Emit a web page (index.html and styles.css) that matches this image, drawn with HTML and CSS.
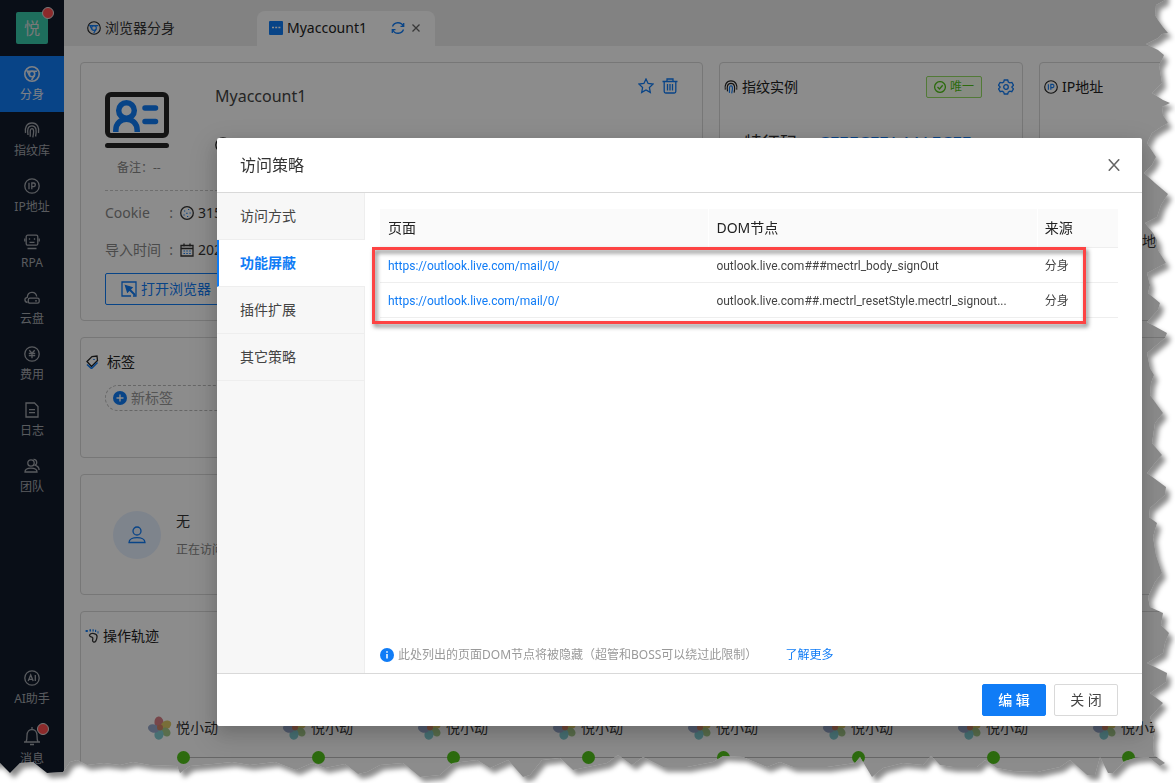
FILE: index.html
```html
<!DOCTYPE html>
<html lang="zh-CN">
<head>
<meta charset="utf-8">
<title>访问策略</title>
<link rel="stylesheet" href="styles.css">
</head>
<body>
<svg class="sprite" aria-hidden="true">
  <defs>
    <symbol id="chrome" viewBox="0 0 16 16"><circle cx="8" cy="8" r="7.2"/><circle class="accent" cx="8" cy="8" r="2.7"/><path class="accent" d="M3.2 5.3h9.8M5.6 9.3L2.8 4.4M10.4 9.3L7.6 14"/></symbol>
    <symbol id="finger" viewBox="0 0 16 16"><path d="M1.500 11C.5 6 2.500 1 8 1s7.500 5 6.500 10M4 13C3.200 8 3.500 3.800 8 3.800c4.500 0 4.800 5 3.600 10.700"/><path class="accent" d="M6.200 14.700C6.400 10 5.600 6.600 8 6.600s1.700 4.500.8 8.700"/></symbol>
    <symbol id="ip" viewBox="0 0 16 16"><circle cx="8" cy="8" r="7.200"/><path class="accent" d="M5 4.800v6.400M7.800 11.200V5h2.100a1.900 1.900 0 0 1 0 3.700H7.800"/></symbol>
    <symbol id="robot" viewBox="0 0 16 16"><rect x="2.200" y="1.200" width="11.600" height="10" rx="1.500"/><path d="M.8 4.500v3M15.200 4.500v3M5.500 4.300v1.500M10.500 4.300v1.500M5.500 8.300h5M3.500 14.500h9"/></symbol>
    <symbol id="cloud" viewBox="0 0 16 16"><path d="M3.500 12.500C.2 12 0 7.800 3.300 7.300 3.600 1 11.800.7 12.700 6.500M6 8.200h7.500q1.700 0 1.700 2v1.300q0 1.700-1.700 1.700H6q-1.700 0-1.700-1.700V10q0-1.800 1.700-1.800zM11 10.800h2"/></symbol>
    <symbol id="yen" viewBox="0 0 16 16"><circle cx="8" cy="8" r="7.200"/><path d="M5.300 4.200L8 7.200l2.700-3M4.800 7.500h6.400M4.800 9.700h6.400M8 7.200v5"/></symbol>
    <symbol id="doc" viewBox="0 0 16 16"><path d="M2 1h8.500L14 4.500V15H2zM5 7.700h6M5 10.700h6"/></symbol>
    <symbol id="team" viewBox="0 0 16 16"><circle cx="7" cy="5" r="3.200"/><path d="M1 14c0-5.300 12-5.300 12 0zM9.500 1.400c3.600-.2 4.200 4.300 1.600 5.800 2 .7 3.900 2.200 4 4.800"/></symbol>
    <symbol id="ai" viewBox="0 0 16 16"><circle cx="8" cy="8" r="7.200"/><path d="M4.200 11L6.700 5l2.500 6M5 9.300h3.400M11.300 5v6"/></symbol>
    <symbol id="bell" viewBox="0 0 20 20"><path d="M2 16h16M4 16c1-2 1-4 1-6.500C5 1.500 15 1.500 15 9.500c0 2.500 0 4.500 1 6.500M10 1v2.500M8 18.500h4"/></symbol>
    <symbol id="star" viewBox="0 0 16 16"><path d="M8 1l2.100 4.500 4.900.6-3.600 3.400.9 4.900L8 12l-4.300 2.400.9-4.900L1 6.100l4.900-.6z"/></symbol>
    <symbol id="trash" viewBox="0 0 16 16"><path d="M.5 3.500h15M5 3.500V1h6v2.500M2.200 3.500V13.500q0 1.500 1.500 1.500h8.600q1.500 0 1.500-1.500V3.500M5.500 6v6.500M8 6v6.500M10.500 6v6.500"/></symbol>
    <symbol id="gear" viewBox="0 0 16 16"><path d="M6.300 1h3.400l.6 2 1.500.9 2.100-.5 1.600 2.900L14 7.800v.6l1.500 1.500-1.700 2.800-2-.5-1.500.9-.6 1.900H6.300l-.6-1.900-1.500-.9-2 .5L.5 9.900 2 8.400v-.6L.5 6.300l1.600-2.900 2.100.5L5.700 3z"/><circle cx="8" cy="8" r="2.300"/></symbol>
    <symbol id="user" viewBox="0 0 18 18"><circle cx="9" cy="5" r="4"/><path d="M1 16.500c0-6.600 16-6.600 16 0z"/></symbol>
    <symbol id="pinwheel" viewBox="0 0 24 24">
      <ellipse cx="11" cy="6.500" rx="4.500" ry="6" fill="#d98088" transform="rotate(-8 11 6.500)"/>
      <ellipse cx="18" cy="9" rx="4.200" ry="5.500" fill="#dcc868" transform="rotate(58 18 9)"/>
      <ellipse cx="18" cy="16" rx="4" ry="5" fill="#a5c98a" transform="rotate(-45 18 16)"/>
      <ellipse cx="11" cy="18.500" rx="4.500" ry="5.300" fill="#82cdd2" transform="rotate(15 11 18.500)"/>
      <ellipse cx="5.500" cy="12.500" rx="4.200" ry="5.600" fill="#98a9cc" transform="rotate(-72 5.500 12.500)"/>
      <circle cx="12" cy="11.500" r="3" fill="#d08468"/>
    </symbol>
  </defs>
</svg>

<div class="app">
  <nav class="rail" aria-label="主导航">
    <div class="rail-head"><span class="avatar">悦<i class="dot"></i></span></div>
    <a class="rail-item current" href="#"><svg class="icon"><use href="#chrome"/></svg>分身</a>
    <a class="rail-item" href="#"><svg class="icon"><use href="#finger"/></svg>指纹库</a>
    <a class="rail-item" href="#"><svg class="icon"><use href="#ip"/></svg>IP地址</a>
    <a class="rail-item" href="#"><svg class="icon"><use href="#robot"/></svg>RPA</a>
    <a class="rail-item" href="#"><svg class="icon"><use href="#cloud"/></svg>云盘</a>
    <a class="rail-item" href="#"><svg class="icon"><use href="#yen"/></svg>费用</a>
    <a class="rail-item" href="#"><svg class="icon"><use href="#doc"/></svg>日志</a>
    <a class="rail-item" href="#"><svg class="icon"><use href="#team"/></svg>团队</a>
    <span class="spacer"></span>
    <a class="rail-item" href="#"><svg class="icon"><use href="#ai"/></svg>AI助手</a>
    <a class="rail-item bell" href="#"><svg class="icon"><use href="#bell"/></svg>消息<i class="dot"></i></a>
  </nav>

  <div class="workspace">
    <header class="tabs">
      <a class="tab" href="#"><svg class="icon small duo"><use href="#chrome"/></svg>浏览器分身</a>
      <div class="tab open">
        <svg class="icon small" viewBox="0 0 14 14"><rect width="14" height="14" rx="1" fill="#107cf6" stroke="none"/><path d="M3 6.500h2M6.200 6.500h2M9.400 6.500h2" stroke="#fff"/></svg>
        <span class="tab-name">Myaccount1</span>
        <button class="bare blue" aria-label="刷新"><svg class="icon small" viewBox="0 0 14 14"><path d="M1.500 5.500C3 1 10 .2 12.200 5M12.700 2v3.300H9.500M12.500 8.500C11 13 4 13.800 1.800 9M1.300 12V8.700h3.200"/></svg></button>
        <button class="bare" aria-label="关闭标签"><svg class="icon tiny" viewBox="0 0 10 10"><path d="M1.500 1.500l7 7M8.500 1.500l-7 7"/></svg></button>
      </div>
    </header>

    <main class="board">
      <section class="card profile">
        <div class="profile-top">
          <div class="profile-pic">
            <svg class="badge" viewBox="0 0 64 56"><rect x="2.500" y="2.500" width="59" height="41" rx="3.500" fill="none" stroke="#262626" stroke-width="5"/><rect y="51" width="64" height="5" rx="2.500" fill="#262626"/><g fill="none" stroke="#107cf6" stroke-width="5.500"><circle cx="21.500" cy="18.500" r="7.800"/><path d="M10.800 40v-1.500c0-15 21.400-15 21.400 0V40"/><path d="M40 16h10.500M40 29.500h10.500" stroke-linecap="round"/></g></svg>
            <span class="remark">备注：--</span>
          </div>
          <div class="profile-text"><span class="name">Myaccount1</span><svg class="icon"><use href="#chrome"/></svg></div>
          <div class="actions">
            <button class="bare blue" aria-label="收藏"><svg class="icon"><use href="#star"/></svg></button>
            <button class="bare blue" aria-label="删除"><svg class="icon"><use href="#trash"/></svg></button>
          </div>
        </div>
        <dl class="facts">
          <dt>Cookie</dt><dd><svg class="icon small" viewBox="0 0 14 14"><circle cx="7" cy="7" r="6.300"/><path class="accent" d="M4 5h1.200M8 3.500h1.200M9.500 7h1.200M6.300 7.300h1.200M3.500 9h1.200M7 10.500h1.200" stroke-width="1.200"/></svg>315</dd>
          <dt>导入时间</dt><dd><svg class="icon small" viewBox="0 0 14 14"><path d="M1 2.500h12V13H1zM1 5.500h12M4 .5v3M10 .5v3"/><path class="accent" d="M3.500 8h1.500M6.300 8h1.500M9.200 8h1.500M3.500 10.500h1.500M6.300 10.500h1.500M9.200 10.500h1.500" stroke-width="1.200"/></svg>2023</dd>
        </dl>
        <button class="launch"><svg class="icon" viewBox="0 0 16 16"><path d="M10 15H1V1h14v14h-3"/><path d="M4.500 4.500l6.500 2-4.500 4.500z" fill="currentColor"/><path d="M8 8l6 6" stroke-width="2"/></svg>打开浏览器</button>
      </section>

      <section class="card">
        <div class="card-head"><svg class="icon small duo"><use href="#finger"/></svg><h2>指纹实例</h2>
          <span class="unique"><svg class="icon tick" viewBox="0 0 12 12"><circle cx="6" cy="6" r="5.400"/><path d="M3.500 6l2 2 3.200-3.700"/></svg>唯一</span>
          <button class="bare blue" aria-label="设置"><svg class="icon"><use href="#gear"/></svg></button>
        </div>
        <p class="code">特征码<b>CFEFCFFA44AFCFF</b></p>
      </section>

      <section class="card">
        <div class="card-head"><svg class="icon small duo"><use href="#ip"/></svg><h2>IP地址</h2></div>
        <p class="place">所在地</p>
      </section>

      <section class="card labels">
        <div class="card-head loose"><svg class="icon small duo" viewBox="0 0 14 14"><path d="M2 6.500L7 1.500l5-.5.500 4.500-6 6z"/><path class="accent" d="M2 9.500l4.500 4 6-6M9 4v1" stroke-width="1.600"/></svg><h2>标签</h2></div>
        <button class="add"><svg class="icon small" viewBox="0 0 14 14"><circle cx="7" cy="7" r="7" fill="#107cf6" stroke="none"/><path d="M7 3.500v7M3.500 7h7" stroke="#fff" stroke-width="1.400"/></svg>新标签</button>
      </section>

      <section class="card tall"></section>

      <section class="card visitor">
        <span class="visitor-pic"><svg class="icon large"><use href="#user"/></svg></span>
        <div class="visitor-text"><strong>无</strong><span>正在访问</span></div>
      </section>

      <section class="card trace">
        <div class="card-head"><svg class="icon small" viewBox="0 0 14 14"><path d="M4.500 6C6 3.500 12.500 4 12 8c-.3 3-1.500 5.500-3.500 5-2-.6-.2-2.700-.8-4.200C7 7.500 4 8 4.500 6z"/><path class="accent" d="M.6 2h2.200M4.500 1.300h1.500M7.500 1.300h1.200M10 1.800h1.200M12.500 3.300h1" stroke-width="2.200"/></svg><h2>操作轨迹</h2></div>
        <ol class="timeline">
          <li><svg class="petals"><use href="#pinwheel"/></svg>悦小动</li>
          <li><svg class="petals"><use href="#pinwheel"/></svg>悦小动</li>
          <li><svg class="petals"><use href="#pinwheel"/></svg>悦小动</li>
          <li><svg class="petals"><use href="#pinwheel"/></svg>悦小动</li>
          <li><svg class="petals"><use href="#pinwheel"/></svg>悦小动</li>
          <li><svg class="petals"><use href="#pinwheel"/></svg>悦小动</li>
          <li><svg class="petals"><use href="#pinwheel"/></svg>悦小动</li>
          <li><svg class="petals"><use href="#pinwheel"/></svg>悦小动</li>
        </ol>
      </section>
    </main>
  </div>
</div>

<div class="mask">
  <div class="dialog" role="dialog" aria-labelledby="dialog-title">
    <header class="dialog-head">
      <h1 id="dialog-title">访问策略</h1>
      <button class="bare" aria-label="关闭"><svg class="icon tick" viewBox="0 0 12 12"><path d="M.8.300l10.400 11.400M11.200.300L.8 11.700" stroke-width="1.600"/></svg></button>
    </header>
    <div class="dialog-body">
      <nav class="side" aria-label="策略">
        <a href="#">访问方式</a>
        <a href="#" class="selected">功能屏蔽</a>
        <a href="#">插件扩展</a>
        <a href="#">其它策略</a>
      </nav>
      <div class="pane">
        <div class="listing">
          <table>
            <colgroup><col class="col-page"><col class="col-node"><col class="col-from"></colgroup>
            <thead><tr><th>页面</th><th>DOM节点</th><th>来源</th></tr></thead>
            <tbody>
              <tr><td><a href="#">https://outlook.live.com/mail/0/</a></td><td>outlook.live.com###mectrl_body_signOut</td><td>分身</td></tr>
              <tr><td><a href="#">https://outlook.live.com/mail/0/</a></td><td>outlook.live.com##.mectrl_resetStyle.mectrl_signout...</td><td>分身</td></tr>
            </tbody>
          </table>
          <div class="highlight"></div>
        </div>
        <p class="note"><svg class="icon small" viewBox="0 0 14 14"><circle cx="7" cy="7" r="7" fill="#107cf6" stroke="none"/><path d="M7 6v4.500M7 3.200v1.500" stroke="#fff" stroke-width="1.500"/></svg><span>此处列出的页面DOM节点将被隐藏（超管和BOSS可以绕过此限制）</span><a href="#">了解更多</a></p>
      </div>
    </div>
    <footer class="dialog-foot">
      <button class="btn primary">编 辑</button>
      <button class="btn">关 闭</button>
    </footer>
  </div>
</div>

<svg class="torn" viewBox="0 0 1175 783" preserveAspectRatio="none" aria-hidden="true">
  <defs>
    <path id="sheet" d="M-20-20H1165V0L1156 5 1155 15 1158 20 1163 27 1168 33 1162 34 1158 38 1146 44 1158 50 1164 55 1162 60 1159 65 1162 83 1152 93 1163 100 1170 103 1162 107 1163 115 1168 123 1161 127 1152 133 1147 143 1156 157 1152 165 1144 173 1155 183 1168 194 1161 205 1157 217 1145 223 1153 233 1157 240 1158 250 1166 263 1147 273 1150 285 1148 293 1160 303 1158 310 1147 322 1167 333 1165 338 1147 353 1150 368 1154 375 1151 383 1150 395 1163 413 1155 423 1152 443 1162 455 1155 463 1147 473 1166 487 1165 495 1150 508 1149 517 1157 523 1153 537 1156 555 1162 573 1155 582 1148 597 1150 607 1163 613 1161 625 1169 633 1165 643 1163 653 1147 663 1167 673 1166 682 1150 693 1163 703 1155 712 1150 717 1155 730 1153 740 1154 755 1165 763 1160 766 1148 757 1135 758 1125 761 1113 773 1108 773 1100 757 1095 775 1087 775 1070 760 1060 767 1037 772 1013 771 997 768 985 760 977 767 953 767 940 765 931 756 923 765 903 763 883 768 872 777 863 762 860 757 855 763 827 767 793 767 780 762 767 767 743 757 723 756 713 762 687 767 663 767 643 757 632 765 618 755 607 763 573 770 560 758 542 760 530 775 523 777 508 760 490 768 477 760 453 763 440 775 420 777 403 763 380 765 367 772 358 774 345 764 325 768 312 763 296 770 275 762 250 765 232 762 213 764 190 766 180 773 177 766 150 765 133 762 120 765 104 763 87 765 77 760 70 762 63 772 47 773 33 762 20 763 10 773 0 763H-20Z"/>
    <clipPath id="outside"><path clip-rule="evenodd" d="M0 0H1175V783H0ZM0 0H1165V0L1156 5 1155 15 1158 20 1163 27 1168 33 1162 34 1158 38 1146 44 1158 50 1164 55 1162 60 1159 65 1162 83 1152 93 1163 100 1170 103 1162 107 1163 115 1168 123 1161 127 1152 133 1147 143 1156 157 1152 165 1144 173 1155 183 1168 194 1161 205 1157 217 1145 223 1153 233 1157 240 1158 250 1166 263 1147 273 1150 285 1148 293 1160 303 1158 310 1147 322 1167 333 1165 338 1147 353 1150 368 1154 375 1151 383 1150 395 1163 413 1155 423 1152 443 1162 455 1155 463 1147 473 1166 487 1165 495 1150 508 1149 517 1157 523 1153 537 1156 555 1162 573 1155 582 1148 597 1150 607 1163 613 1161 625 1169 633 1165 643 1163 653 1147 663 1167 673 1166 682 1150 693 1163 703 1155 712 1150 717 1155 730 1153 740 1154 755 1165 763 1160 766 1148 757 1135 758 1125 761 1113 773 1108 773 1100 757 1095 775 1087 775 1070 760 1060 767 1037 772 1013 771 997 768 985 760 977 767 953 767 940 765 931 756 923 765 903 763 883 768 872 777 863 762 860 757 855 763 827 767 793 767 780 762 767 767 743 757 723 756 713 762 687 767 663 767 643 757 632 765 618 755 607 763 573 770 560 758 542 760 530 775 523 777 508 760 490 768 477 760 453 763 440 775 420 777 403 763 380 765 367 772 358 774 345 764 325 768 312 763 296 770 275 762 250 765 232 762 213 764 190 766 180 773 177 766 150 765 133 762 120 765 104 763 87 765 77 760 70 762 63 772 47 773 33 762 20 763 10 773 0 763Z"/></clipPath>
    <filter id="soft" x="-5%" y="-5%" width="110%" height="110%"><feGaussianBlur stdDeviation="2.500"/></filter>
  </defs>
  <g clip-path="url(#outside)">
    <rect width="1175" height="783" fill="#fff"/>
    <use href="#sheet" transform="translate(4 5)" fill="#000" fill-opacity=".45" filter="url(#soft)"/>
  </g>
</svg>
</body>
</html>
```

FILE: styles.css
```css
* { box-sizing: border-box; }
body {
  margin: 0;
  height: 100vh;
  overflow: hidden;
  font: 14px/22px "Noto Sans", "Noto Sans CJK SC", sans-serif;
  color: #333;
  background: #fff;
}
h1, h2, p, dl, dd, ol { margin: 0; padding: 0; font-weight: 400; }
a { color: #107cf6; text-decoration: none; }
button { font: inherit; color: inherit; cursor: pointer; }
.sprite { position: absolute; width: 0; height: 0; }

.icon { flex: none; width: 16px; height: 16px; fill: none; stroke: currentColor; stroke-width: 1.3; }
.icon.small { width: 14px; height: 14px; }
.icon.tick { width: 12px; height: 12px; }
.icon.tiny { width: 10px; height: 10px; }
.icon.large { width: 18px; height: 18px; }
.accent { stroke: var(--accent, currentColor); }
.workspace { --accent: #107cf6; }
.duo { color: #222; }
.bare { display: flex; padding: 0; border: 0; background: none; color: #666; }
.blue { color: #107cf6; }

.app { display: flex; height: 100%; overflow: hidden; }
.rail { display: flex; flex-direction: column; flex: none; width: 64px; padding-bottom: 11px; background: #121b2b; }
.rail-head { display: flex; align-items: center; justify-content: center; height: 56px; }
.avatar { position: relative; width: 32px; height: 32px; border-radius: 2px; background: #37c8aa; color: #ddd; font-size: 16px; line-height: 32px; text-align: center; }
.dot { position: absolute; top: -5px; right: -6px; width: 12px; height: 12px; border: 1px solid #ddd; border-radius: 50%; background: #ff4d4f; }
.rail-item { position: relative; display: flex; flex-direction: column; align-items: center; gap: 4px; height: 56px; padding-top: 10px; color: #a3a6ad; font-size: 12px; line-height: 18px; }
.rail-item.current { background: #107cf6; color: #e6ecf5; }
.rail-item.current .icon { stroke-width: 1.6; }
.bell .icon { width: 20px; height: 20px; }
.bell .dot { top: 7px; right: 15px; }
.spacer { flex: 1; }

.workspace { display: flex; flex-direction: column; flex: 1; min-width: 0; }
.tabs { display: flex; align-items: flex-end; flex: none; height: 46px; padding-left: 15px; background: #ededed; }
.tab { display: flex; align-items: center; gap: 4px; width: 178px; height: 35px; padding: 0 8px 1px; color: #333; }
.tab.open { gap: 6px; padding: 0 14px 1px 12px; border-radius: 8px 8px 0 0; background: #fff; }
.tab-name { flex: 1; margin-left: -2px; color: #222; }

.board { display: grid; grid-template-columns: 623fr 304fr 304fr; grid-template-rows: 259px 121px 121px 200px; gap: 16px; margin: 16px -168px 0 16px; }
.card { min-width: 0; border: 1px solid #d9d9d9; border-radius: 4px; }
.card-head { display: flex; align-items: center; gap: 4px; height: 48px; padding: 0 8px 0 4px; }
.card-head h2 { flex: 1; font-size: 14px; color: #222; }
.loose { gap: 8px; }
.tall { grid-column: 2 / 4; grid-row: 2 / 4; }

.profile { display: flex; flex-direction: column; padding: 13px 24px 15px; }
.profile-top { display: flex; height: 115px; border-bottom: 1px dashed #c8c8c8; }
.profile-pic { display: flex; flex-direction: column; gap: 10px; width: 110px; padding-top: 16px; }
.badge { width: 64px; height: 56px; }
.remark { padding-left: 12px; color: #888; font-size: 12px; line-height: 20px; }
.profile-text { display: flex; flex-direction: column; flex: 1; gap: 30px; padding-top: 9px; color: #222; }
.name { font-size: 16px; color: #444; }
.actions { display: flex; align-items: flex-start; gap: 8px; padding-top: 2px; }
.facts { display: grid; grid-template-columns: 75px 1fr; row-gap: 15px; padding-top: 11px; }
.facts dt { display: flex; justify-content: space-between; padding-right: 7px; color: #888; }
.facts dt::after { content: ":"; }
.facts dd { display: flex; align-items: center; gap: 4px; color: #333; }
.launch { display: flex; align-items: center; gap: 4px; align-self: flex-start; min-width: 160px; height: 32px; margin-top: auto; padding: 0 15px; border: 1px solid #107cf6; border-radius: 2px; background: none; color: #107cf6; }

.unique { display: flex; align-items: center; gap: 4px; height: 22px; margin-right: 12px; padding: 0 7px; border: 1px solid #95de64; border-radius: 2px; background: #f6ffed; color: #52c41a; font-size: 12px; }
.code { display: flex; gap: 20px; padding: 18px 24px 0; font-size: 18px; line-height: 28px; }
.code b { color: #107cf6; font-weight: 400; }
.place { padding: 119px 0 0 74px; }

.add { display: flex; align-items: center; gap: 4px; width: 240px; height: 26px; margin: -1px 0 0 24px; padding: 0 7px; border: 1px dashed #bbb; border-radius: 13px; background: none; color: #999; }
.visitor { display: flex; align-items: center; gap: 15px; padding: 0 32px; }
.visitor-pic { display: flex; align-items: center; justify-content: center; width: 48px; height: 48px; border-radius: 50%; background: #e6f0ff; color: #107cf6; }
.visitor-text { display: flex; flex-direction: column; gap: 7px; padding-top: 2px; color: #888; font-size: 12px; }
.visitor-text strong { color: #333; font-size: 14px; font-weight: 400; }
.trace { grid-column: 1 / 4; }
.timeline { display: flex; padding: 56px 0 0 67px; list-style: none; }
.timeline li { position: relative; display: flex; align-items: center; gap: 4px; flex: none; width: 135px; height: 52px; padding-bottom: 28px; }
.timeline li::before { content: ""; position: absolute; left: 35px; bottom: 10px; width: 135px; height: 1px; background: #bbb; }
.timeline li::after { content: ""; position: absolute; left: 29px; bottom: 4px; width: 13px; height: 13px; border-radius: 50%; background: #52c41a; }
.petals { flex: none; width: 24px; height: 24px; }

.mask { position: fixed; inset: 0; display: flex; padding: 138px 33px 57px 217px; background: rgba(0, 0, 0, .45); }
.dialog { display: flex; flex-direction: column; flex: 1; min-width: 0; border-radius: 2px; background: #fff; box-shadow: 0 6px 16px rgba(0, 0, 0, .14), 0 9px 28px 8px rgba(0, 0, 0, .1); }
.dialog-head { display: flex; align-items: center; justify-content: space-between; height: 55px; padding: 0 22px 0 23px; border-bottom: 1px solid #d9d9d9; }
.dialog-head h1 { font-size: 16px; line-height: 24px; color: #333; }
.dialog-body { display: flex; flex: 1; min-height: 0; }
.side { flex: none; width: 148px; border-right: 1px solid #eee; background: #f7f7f7; }
.side a { display: flex; align-items: center; height: 47px; padding-left: 23px; border-bottom: 1px solid #eee; color: #444; }
.side .selected { margin-right: -1px; padding-left: 21px; border-left: 2px solid #107cf6; background: #fff; color: #107cf6; font-weight: 700; }
.pane { display: flex; flex-direction: column; justify-content: space-between; flex: 1; min-width: 0; padding: 16px 24px 7px 15px; }
.listing { position: relative; }
table { width: 100%; table-layout: fixed; border-collapse: separate; border-spacing: 0; }
.col-page, .col-node { width: 44.5%; }
.col-from { width: 11%; }
th, td { padding: 0 8px; border-bottom: 1px solid #eee; text-align: left; white-space: nowrap; }
th { height: 39px; background: #fafafa; color: #222; font-weight: 400; }
th + th { padding-left: 7px; border-left: 1px solid #fff; }
td { height: 35px; padding-top: 2px; font: 12px/20px Roboto, "Noto Sans CJK SC", sans-serif; color: #444; }
.highlight { position: absolute; inset: 38px 32px -6px -8px; border: 3px solid #fd4343; filter: drop-shadow(2px 3px 2px rgba(0, 0, 0, .5)); pointer-events: none; }
.note { display: flex; align-items: center; gap: 4px; color: #999; font-size: 12px; }
.note a { margin-left: 24px; }
.dialog-foot { display: flex; justify-content: flex-end; gap: 8px; padding: 10px 24px; border-top: 1px solid #d9d9d9; }
.btn { min-width: 64px; height: 32px; padding: 0 8px; border: 1px solid #d9d9d9; border-radius: 2px; background: #fff; color: #444; }
.primary { border-color: #107cf6; background: #107cf6; color: #fff; font-weight: 500; }

.torn { position: fixed; inset: 0; width: 100%; height: 100%; pointer-events: none; }
```
